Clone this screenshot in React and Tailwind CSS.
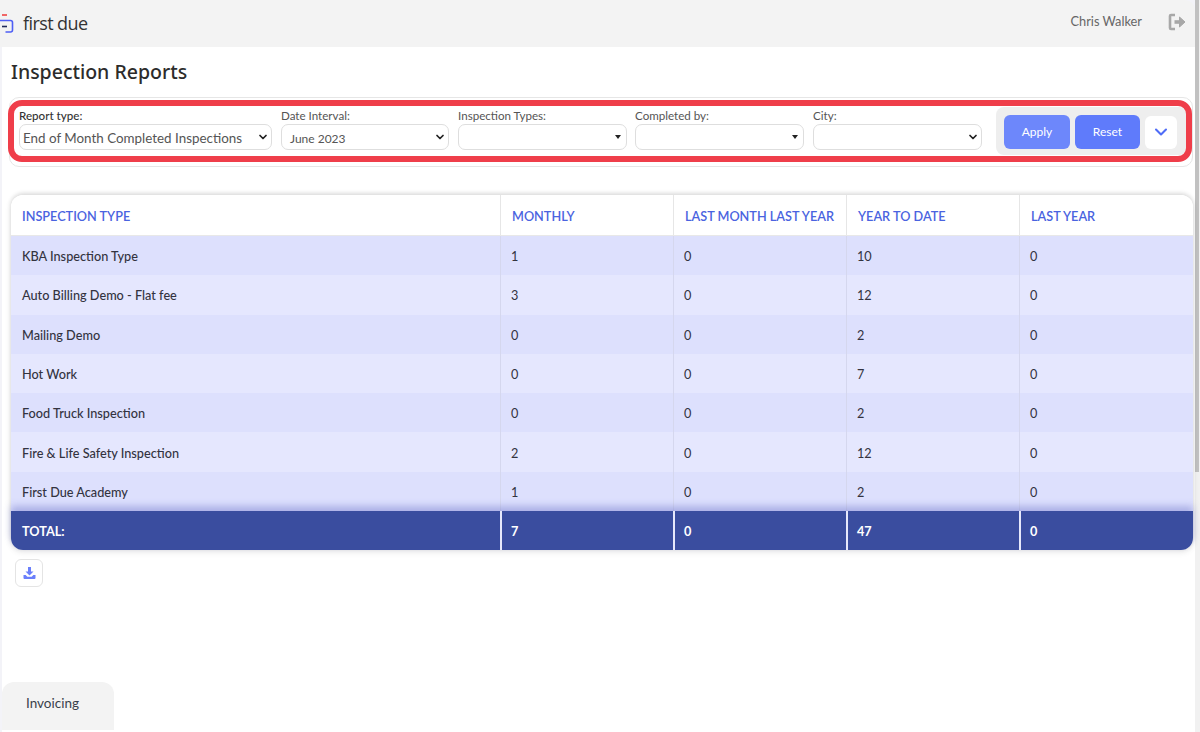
import React from 'react';
import { ChevronDown } from 'lucide-react';

const rows = [
  ['KBA Inspection Type', 1, 0, 10, 0],
  ['Auto Billing Demo - Flat fee', 3, 0, 12, 0],
  ['Mailing Demo', 0, 0, 2, 0],
  ['Hot Work', 0, 0, 7, 0],
  ['Food Truck Inspection', 0, 0, 2, 0],
  ['Fire & Life Safety Inspection', 2, 0, 12, 0],
  ['First Due Academy', 1, 0, 2, 0],
];

const columns = ['INSPECTION TYPE', 'MONTHLY', 'LAST MONTH LAST YEAR', 'YEAR TO DATE', 'LAST YEAR'];
const grid = 'grid grid-cols-[489px_173px_173px_173px_174px]';

function Logo() {
  return (
    <div className="flex items-center">
      <svg width="14" height="20" viewBox="0 0 14 20" fill="none">
        <path d="M2 1h5" stroke="#ef4444" strokeWidth="1.6" />
        <path d="M2 12.5h5" stroke="#1f2a5a" strokeWidth="1.6" />
        <path d="M0 6.5h10.5a2 2 0 0 1 2 2v7.5a2 2 0 0 1-2 2H5.5" stroke="#4f5ff5" strokeWidth="1.6" />
      </svg>
      <span className="ml-[9px] text-[18px] tracking-[-0.6px] text-[#333] font-['Open_Sans',sans-serif]">first due</span>
    </div>
  );
}

function Field({ label, width, value, caret }) {
  return (
    <div className={`flex flex-col ${width}`}>
      <label className="h-[17px] text-[11.6px] leading-[17px] text-[#555]">{label}</label>
      <div className={`flex h-[26px] items-center justify-between rounded-[7px] border border-[#dedede] bg-white pl-[8px] text-[12px] text-[#555] ${caret ? 'pr-[5px]' : 'pr-[2px]'}`}>
        <span className="pt-[3px]">{value}</span>
        {caret ? (
          <span className="h-0 w-0 border-x-[3px] border-t-[4px] border-x-transparent border-t-[#222]" />
        ) : (
          <ChevronDown size={12} strokeWidth={3.5} className="text-[#222]" />
        )}
      </div>
    </div>
  );
}

function Filters() {
  return (
    <div className="relative mt-[11px] ml-[7px] mr-[2px] flex h-[70px] items-start rounded-[10px] border border-[#e6e6e6] pl-[9px] pr-[5px] pt-[9px]">
      <div className="flex gap-[9px]">
        <div className="flex w-[253px] flex-col">
          <label className="h-[17px] text-[11.6px] font-medium leading-[17px] text-[#333]">Report type:</label>
          <div className="flex h-[26px] items-center justify-between rounded-[7px] border border-[#dedede] bg-white pl-[3px] pr-[2px] text-[13.4px] text-[#555]">
            <span className="pt-[2px]">End of Month Completed Inspections</span>
            <ChevronDown size={12} strokeWidth={3.5} className="text-[#222]" />
          </div>
        </div>
        <Field label="Date Interval:" width="w-[168px]" value="June 2023" />
        <Field label="Inspection Types:" width="w-[169px] -mr-[1px]" caret />
        <Field label="Completed by:" width="w-[169px]" caret />
        <Field label="City:" width="w-[169px]" />
      </div>
      <div className="ml-auto flex h-[48px] w-[191px] items-center gap-[5px] rounded-[8px] bg-[#eeeeee] pl-[8px] pt-[2px]">
        <button className="h-[34px] w-[66px] rounded-[6px] bg-[#6d87fb] text-[12px] text-white">Apply</button>
        <button className="h-[34px] w-[65px] rounded-[6px] bg-[#5f7bfb] text-[12px] text-white">Reset</button>
        <button className="flex h-[33px] w-[32px] items-center justify-center rounded-[6px] bg-white">
          <ChevronDown size={20} strokeWidth={2.5} className="text-[#4f6cf7]" />
        </button>
      </div>
      {/* red annotation from the screenshot */}
      <div className="pointer-events-none absolute -left-[2px] right-0 top-[2px] h-[62px] rounded-[14px] border-[6px] border-[#ef3e4a]" />
    </div>
  );
}

function ReportTable() {
  return (
    <div className="ml-[9px] mt-[28px] w-[1182px] rounded-[12px] text-[12.7px] shadow-[0_-2px_4px_rgba(0,0,0,0.12),0_2px_6px_rgba(0,0,0,0.1)]">
      <div className={`${grid} h-[41px] rounded-t-[12px] border-b border-[#e8e8e8] bg-white font-semibold text-[#4a63e0]`}>
        {columns.map((c, i) => (
          <div key={c} className={`flex items-center pl-[11px] pt-[3px] ${i > 0 ? 'border-l border-[#e6e6e6]' : ''}`}>{c}</div>
        ))}
      </div>
      {rows.map((r, i) => (
        <div key={r[0]} className={`${grid} h-[39.3px] ${i % 2 === 0 ? 'bg-[#dde0fd]' : 'bg-[#e5e7fe]'} text-[#33333f]`}>
          <div className="flex items-center pl-[11px] pt-[2px] font-medium">{r[0]}</div>
          {r.slice(1).map((v, j) => (
            <div key={j} className="flex items-center border-l border-[#d5d7ee] pl-[10px] pt-[2px]">{v}</div>
          ))}
        </div>
      ))}
      <div className={`${grid} relative h-[39px] rounded-b-[12px] bg-[#3a4d9f] font-bold text-white shadow-[0_-5px_7px_rgba(80,90,190,0.35)]`}>
        <div className="flex items-center pl-[11px] pt-[2px]">TOTAL:</div>
        {[7, 0, 47, 0].map((v, j) => (
          <div key={j} className="flex items-center border-l-2 border-[#e6e8fb] pl-[9px] pt-[2px]">{v}</div>
        ))}
      </div>
    </div>
  );
}

export default function App() {
  return (
    <div className="flex h-[732px] w-[1200px] overflow-hidden bg-[#f3f3f8] font-['Lato',sans-serif]">
      <div className="flex w-[1195px] flex-col">
        <header className="flex h-[47px] shrink-0 items-center justify-between rounded-tr-[10px] bg-[#f3f3f3] pr-[9px]">
          <Logo />
          <div className="flex items-center gap-[26px] pb-[3px]">
            <span className="text-[12.8px] text-[#666]">Chris Walker</span>
            <svg width="18" height="18" viewBox="0 0 18 18" fill="none" stroke="#a8a8a8" strokeWidth="2.6">
              <path d="M7 2H3a1 1 0 0 0-1 1v12a1 1 0 0 0 1 1h4" />
              <path d="M6.500 9h7" strokeWidth="3.6" />
              <path d="M11.500 4 17 9l-5.500 5z" fill="#a8a8a8" strokeWidth="1" />
            </svg>
          </div>
        </header>
        <main className="relative ml-[2px] flex flex-1 flex-col bg-white">
          <h1 className="ml-[9px] mt-[12px] h-[26px] text-[19.5px] font-medium leading-[26px] text-[#2c2c2c] font-['Noto_Sans',sans-serif]">Inspection Reports</h1>
          <div className="h-[1px]" />
          <Filters />
          <ReportTable />
          <button className="ml-[13px] mt-[9px] flex h-[28px] w-[28px] items-center justify-center rounded-[6px] border border-[#e4e4e4] bg-white">
            <svg width="15" height="14" viewBox="0 0 14 14" fill="#6a7ffb">
              <path d="M5.500 1h3v4.500H11L7 9.500 3 5.500h2.500z" />
              <path d="M1 9h2.200l1.600 1.800h4.400L10.800 9H13v3a1 1 0 0 1-1 1H2a1 1 0 0 1-1-1z" />
            </svg>
          </button>
          <div className="mt-auto mb-[2px] h-[48px] w-[112px] rounded-t-[12px] bg-[#f3f3f3] pl-[24px] pt-[11px] text-[13.5px] text-[#3a3f4a]">Invoicing</div>
        </main>
      </div>
      <div className="w-[5px] bg-[#f1f1f1]">
        <div className="h-[472px] w-[4px] bg-[#c1c1c1]" />
      </div>
    </div>
  );
}
